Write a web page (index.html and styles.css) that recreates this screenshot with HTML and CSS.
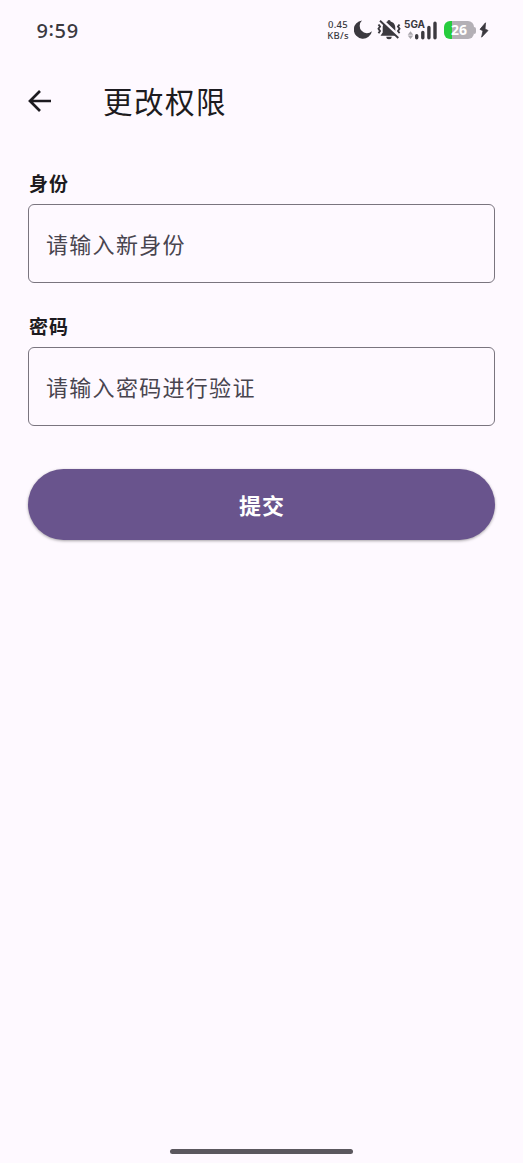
FILE: index.html
```html
<!DOCTYPE html>
<html lang="zh-CN">
<head>
<meta charset="utf-8">
<meta name="viewport" content="width=device-width">
<title>更改权限</title>
<link rel="stylesheet" href="styles.css">
</head>
<body>
<div class="screen">
  <div class="status">
    <span class="clock">9<span class="colon">:</span>59</span>
    <div class="indicators">
      <div class="speed"><span>0.45</span><span>KB/s</span></div>
      <svg class="moon" width="18" height="19" viewBox="0 0 18 19"><path d="M8 .6A9.100 9.100 0 1 0 17.900 11.200 5.800 5.800 0 0 1 8 .6Z" fill="#3b393f"/></svg>
      <svg class="bell" width="24" height="22" viewBox="0 0 24 22">
        <path d="M12 1a1.600 1.600 0 0 1 1.600 1.600C17 3.400 18.300 6 18.300 9v4.400l2.200 3.400h-17l2.200-3.400V9c0-3 1.300-5.600 4.700-6.400A1.600 1.600 0 0 1 12 1ZM9.300 17.700h5.400a2.700 2.500 0 0 1-5.400 0Z" fill="#3b393f"/>
        <path d="M1.500 5.500 3 7.600 1.500 9.800 3 12l-1.500 2.200M22.500 5.500 21 7.600l1.500 2.200L21 12l1.500 2.200" fill="none" stroke="#3b393f" stroke-width="1.900"/>
        <path d="M4.600.9 23 18.200" stroke="#fdf8ff" stroke-width="3"/>
        <path d="M3 1.800 21.300 19" stroke="#3b393f" stroke-width="1.900"/>
      </svg>
      <div class="network">
        <span class="network-type">5GA</span>
        <svg class="signal" width="34" height="20" viewBox="0 0 34 20">
          <path d="m6.500 10.300 2.800 3.400H3.700ZM6.500 18l2.800-3.400H3.700Z" fill="#aaa7ad"/>
          <path d="M12.700 14.700v2.100M18.800 11.500v5.300M24.900 6.500v10.300M31 2.300v14.500" fill="none" stroke="#3b393f" stroke-width="3.400" stroke-linecap="round"/>
        </svg>
      </div>
      <div class="battery"><span class="battery-body">26</span><span class="battery-tip"></span></div>
      <svg class="bolt" width="10" height="16" viewBox="0 0 10 16"><path d="M6.500.8 1 7.300 4 8.800 2.600 15.200 9 8.500 6 7Z" fill="#3b393f" stroke="#3b393f" stroke-width=".8" stroke-linejoin="round"/></svg>
    </div>
  </div>
  <header class="appbar">
    <svg class="back" width="24" height="24" viewBox="0 0 24 24"><path d="M12 2 2 12l10 10M2 12H23" fill="none" stroke="#1d1b20" stroke-width="2.700"/></svg>
    <h1 class="title">更改权限</h1>
  </header>
  <main class="form">
    <label class="label" for="role">身份</label>
    <input class="field" id="role" type="text" placeholder="请输入新身份">
    <label class="label label-next" for="password">密码</label>
    <input class="field" id="password" type="password" placeholder="请输入密码进行验证">
    <button class="submit" type="button">提交</button>
  </main>
  <div class="home"></div>
</div>
</body>
</html>
```
FILE: styles.css
```css
* { box-sizing: border-box; }
body {
  margin: 0;
  background: #fef9ff;
  color: #1d1b20;
  font-family: "Noto Sans CJK SC", sans-serif;
}
.screen {
  display: flex;
  flex-direction: column;
  height: 1163px;
}
.status {
  display: flex;
  justify-content: space-between;
  align-items: center;
  height: 60px;
  padding: 0 34px 0 36px;
  color: #3b393f;
}
.clock {
  padding: 2px 0 0 .500px;
  font: 500 20px/24px "Noto Sans", sans-serif;
  letter-spacing: .600px;
}
.colon {
  display: inline-block;
  transform: translateY(-2px);
}
.indicators { display: flex; align-items: center; }
.speed {
  display: flex;
  flex-direction: column;
  align-items: center;
  width: 24px;
  margin: 0 4px 1px 0;
  font: 500 9.500px/11px "Noto Sans", sans-serif;
  letter-spacing: .300px;
}
.moon { margin: 0 5px 1px 0; }
.bell { margin: 0 3px 1px 0; }
.network {
  display: grid;
  width: 34px;
  height: 22px;
  margin: 0 6px 1px 0;
}
.network-type {
  grid-area: 1 / 1;
  font: 700 10px/10px Inter, sans-serif;
}
.signal { grid-area: 1 / 1; align-self: end; }
.battery { display: flex; align-items: center; margin-right: 3px; }
.battery-body {
  width: 30px;
  height: 18px;
  border-radius: 6px;
  background: linear-gradient(90deg, #26cc3d 8px, #b4b0b6 8px);
  color: #fff;
  font: 700 14px/18px "Open Sans", sans-serif;
  text-align: center;
}
.battery-tip {
  width: 2px;
  height: 7px;
  border-radius: 0 3px 3px 0;
  background: #b4b0b6;
}
.appbar {
  display: flex;
  align-items: center;
  height: 82px;
  padding: 0 28px;
}
.back { margin-right: 51px; }
.title {
  margin: -2px 0 0;
  font-size: 29.500px;
  font-weight: 400;
  line-height: 40px;
  letter-spacing: 1.500px;
}
.form {
  display: flex;
  flex-direction: column;
  padding: 28px 28px 0;
}
.label {
  height: 34px;
  padding-left: 1px;
  font-size: 19px;
  font-weight: 700;
  line-height: 26px;
  letter-spacing: 1px;
}
.label-next { margin-top: 30px; }
.field {
  width: 100%;
  height: 79px;
  padding: 0 17px 1px;
  border: 1.500px solid #7a757f;
  border-radius: 6px;
  outline: none;
  background: transparent;
  font: 400 22px/30px "Noto Sans CJK SC", sans-serif;
  letter-spacing: 1.300px;
}
.field::placeholder { color: #49454f; opacity: 1; }
.submit {
  height: 70.500px;
  margin-top: 43px;
  padding: 0 0 1px 1px;
  border: 0;
  border-radius: 36px;
  background: #69548d;
  color: #fff;
  font: 700 22px/30px "Noto Sans CJK SC", sans-serif;
  letter-spacing: 1px;
  box-shadow: 0 1px 3px rgba(0, 0, 0, .35);
}
.home {
  align-self: center;
  width: 183px;
  height: 5px;
  margin: auto 0 9px;
  border-radius: 3px;
  background: #5b585e;
}
```
